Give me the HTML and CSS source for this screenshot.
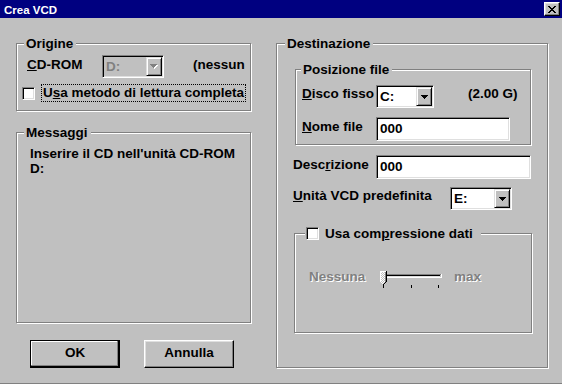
FILE: index.html
```html
<!DOCTYPE html>
<html>
<head>
<meta charset="utf-8">
<link rel="stylesheet" href="styles.css">
</head>
<body>
<div class="dialog">
  <div class="titlebar">
    <span class="title">Crea VCD</span>
    <span class="close"><svg class="xicon" width="8" height="7" viewBox="0 0 8 7" shape-rendering="crispEdges"><path fill="#000" d="M0 0h2v1h-2zM6 0h2v1h-2zM1 1h2v1h-2zM5 1h2v1h-2zM2 2h4v1h-4zM3 3h2v1h-2zM2 4h4v1h-4zM1 5h2v1h-2zM5 5h2v1h-2zM0 6h2v1h-2zM6 6h2v1h-2z"/></svg></span>
  </div>
  <div class="content">
    <div class="col-left">
      <div class="group g-origine">
        <div class="legend lg-origine">Origine</div>
        <div class="row r-cdrom">
          <span class="lbl l-cdrom"><u>C</u>D-ROM</span>
          <span class="combo disabled c-d">
            <span class="ctext">D:</span>
            <span class="cbtn"><svg class="arrow" width="8" height="5" viewBox="0 0 8 5" shape-rendering="crispEdges"><path fill="#fff" d="M1 1h7v1h-1v1h-1v1h-1v1h-1v-1h-1v-1h-1v-1h-1z"/><path fill="#808080" d="M0 0h7v1h-1v1h-1v1h-1v1h-1v-1h-1v-1h-1v-1h-1z"/></svg></span>
          </span>
          <span class="static">(nessun</span>
        </div>
        <div class="row r-check">
          <span class="check"></span>
          <span class="focus">U<u>s</u>a metodo di lettura completa</span>
        </div>
      </div>

      <div class="group g-msg">
        <div class="legend lg-msg">Messaggi</div>
        <div class="msg">Inserire il CD nell'unità CD-ROM<br>D:</div>
      </div>

      <div class="buttons">
        <div class="btn default">OK</div>
        <div class="btn">Annulla</div>
      </div>
    </div>

    <div class="col-right">
      <div class="group g-dest">
        <div class="legend lg-dest">Destinazione</div>

        <div class="group g-pos">
          <div class="legend lg-pos">Posizione file</div>
          <div class="row r-disco">
            <span class="lbl l-pos"><u>D</u>isco fisso</span>
            <span class="combo c-c">
              <span class="ctext">C:</span>
              <span class="cbtn"><svg class="arrow" width="7" height="4" viewBox="0 0 7 4" shape-rendering="crispEdges"><path fill="#000" d="M0 0h7v1h-1v1h-1v1h-1v1h-1v-1h-1v-1h-1v-1h-1z"/></svg></span>
            </span>
            <span class="size">(2.00 G)</span>
          </div>
          <div class="row r-nome">
            <span class="lbl l-pos l-nome"><u>N</u>ome file</span>
            <span class="field f-nome">000</span>
          </div>
        </div>

        <div class="row r-desc">
          <span class="lbl l-desc">Desc<u>r</u>izione</span>
          <span class="field f-desc">000</span>
        </div>

        <div class="row r-unita">
          <span class="lbl l-unita"><u>U</u>nità VCD predefinita</span>
          <span class="combo c-e">
            <span class="ctext">E:</span>
            <span class="cbtn"><svg class="arrow" width="7" height="4" viewBox="0 0 7 4" shape-rendering="crispEdges"><path fill="#000" d="M0 0h7v1h-1v1h-1v1h-1v1h-1v-1h-1v-1h-1v-1h-1z"/></svg></span>
          </span>
        </div>

        <div class="group g-comp">
          <div class="legend lg-comp">
            <span class="check"></span>
            <span class="lg-text">Usa com<u>p</u>ressione dati</span>
          </div>
          <div class="row r-slider">
            <span class="dis nessuna">Nessuna</span>
            <svg class="slider" width="66" height="19" viewBox="0 0 66 19" shape-rendering="crispEdges">
              <defs>
                <pattern id="dith" width="2" height="2" patternUnits="userSpaceOnUse">
                  <rect width="2" height="2" fill="#c0c0c0"/>
                  <rect width="1" height="1" fill="#fff"/>
                  <rect x="1" y="1" width="1" height="1" fill="#fff"/>
                </pattern>
              </defs>
              <rect x="4" y="5" width="59" height="1" fill="#808080"/>
              <rect x="4" y="5" width="1" height="3" fill="#808080"/>
              <rect x="5" y="6" width="57" height="1" fill="#000"/>
              <rect x="5" y="7" width="57" height="1" fill="#dfdfdf"/>
              <rect x="4" y="8" width="60" height="1" fill="#fff"/>
              <rect x="63" y="5" width="1" height="4" fill="#fff"/>
              <rect x="5" y="16" width="1" height="3" fill="#000"/>
              <rect x="33" y="16" width="1" height="3" fill="#000"/>
              <rect x="60" y="16" width="1" height="3" fill="#000"/>
              <path d="M2 2h7v11l-3.5 3.5L2 13z" fill="url(#dith)"/>
              <rect x="2" y="2" width="6" height="1" fill="#fff"/>
              <rect x="2" y="2" width="1" height="11" fill="#fff"/>
              <rect x="3" y="13" width="1" height="1" fill="#fff"/>
              <rect x="4" y="14" width="1" height="1" fill="#fff"/>
              <rect x="8" y="2" width="1" height="11" fill="#000"/>
              <rect x="7" y="3" width="1" height="10" fill="#808080"/>
              <rect x="7" y="13" width="1" height="1" fill="#000"/>
              <rect x="6" y="14" width="1" height="1" fill="#000"/>
              <rect x="5" y="15" width="1" height="1" fill="#000"/>
            </svg>
            <span class="dis max">max</span>
          </div>
        </div>
      </div>
    </div>
  </div>
</div>
</body>
</html>
```
FILE: styles.css
```css
* {
  box-sizing: border-box;
  margin: 0;
  padding: 0;
}

html, body {
  width: 562px;
  height: 384px;
  overflow: hidden;
}

body {
  background: #c0c0c0;
  font-family: "Liberation Sans", Arial, sans-serif;
  font-weight: bold;
  font-size: 13.5px;
  line-height: 16px;
  color: #000;
}

svg { display: block; }

.dialog {
  width: 562px;
  height: 384px;
  border-bottom: 1px solid #808080;
  display: flex;
  flex-direction: column;
}

/* title bar */
.titlebar {
  height: 18px;
  flex: none;
  background: #000080;
  color: #fff;
  display: flex;
  align-items: flex-start;
  justify-content: space-between;
  padding: 0 2px 0 4px;
}

.title {
  font-size: 11.5px;
  line-height: 14px;
  margin-top: 3px;
}

.close {
  width: 16px;
  height: 14px;
  margin-top: 2px;
  background: #c0c0c0;
  border: 1px solid;
  border-color: #fff #000 #000 #fff;
  box-shadow: inset -1px -1px #808080, inset 1px 1px #dfdfdf;
}

.xicon { margin: 3px 0 0 3px; }

/* layout */
.content {
  flex: 1;
  display: flex;
  align-items: flex-start;
  padding-left: 16px;
}

.col-left {
  width: 235px;
  flex: none;
  display: flex;
  flex-direction: column;
}

.col-right {
  flex: none;
  margin-left: 25px;
}

/* etched group box */
.group {
  flex: none;
  border: 1px solid #808080;
  box-shadow: 1px 1px 0 #fff, inset 1px 1px 0 #fff;
  display: flex;
  flex-direction: column;
  align-items: flex-start;
}

.legend {
  flex: none;
  height: 16px;
  margin-top: -8px;
  padding: 0 3px 0 2px;
  background: #c0c0c0;
  white-space: nowrap;
}

.row {
  flex: none;
  display: flex;
  align-items: flex-start;
}

.lbl { flex: none; white-space: nowrap; }

/* Origine */
.g-origine { margin-top: 25px; width: 235px; height: 68px; }
.lg-origine { margin-left: 7px; }
.r-cdrom { margin-top: 3px; height: 23px; }
.l-cdrom { width: 75px; margin: 2px 0 0 10px; }
.c-d { width: 62px; }
.static {
  width: 55px;
  height: 16px;
  margin: 2px 0 0 29px;
  overflow: hidden;
  white-space: nowrap;
}
.r-check { margin-top: 6px; height: 18px; }
.r-check .check { margin: 3px 0 0 5px; }
.focus {
  width: 205px;
  height: 18px;
  margin-left: 6px;
  padding: 0 1px;
  border: 1px dotted #000;
  white-space: nowrap;
}

/* Messaggi */
.g-msg { margin-top: 21px; width: 235px; height: 191px; }
.lg-msg { margin-left: 7px; }
.msg { margin: 5px 0 0 13px; line-height: 15px; }

/* buttons */
.buttons {
  display: flex;
  gap: 24px;
  margin: 17px 0 0 14px;
}

.btn {
  width: 90px;
  height: 28px;
  padding-bottom: 2px;
  display: flex;
  align-items: center;
  justify-content: center;
  border: 1px solid;
  border-color: #fff #000 #000 #fff;
  box-shadow: inset -1px -1px #808080, inset 1px 1px #dfdfdf;
}

.btn.default {
  border-color: #000;
  box-shadow: inset -1px -1px #000, inset -2px -2px #808080, inset 1px 1px #fff;
}

/* combos, fields, checkboxes */
.combo, .field, .check {
  flex: none;
  background: #fff;
  border: 1px solid;
  border-color: #808080 #fff #fff #808080;
  box-shadow: inset 1px 1px #000, inset -1px -1px #dfdfdf;
}

.combo {
  height: 23px;
  padding: 1px;
  display: flex;
  align-items: center;
}

.combo.disabled { background: #c0c0c0; }
.combo.disabled .ctext { color: #808080; }

.ctext {
  flex: 1;
  padding-left: 2px;
  white-space: nowrap;
}

.cbtn {
  width: 16px;
  height: 19px;
  flex: none;
  align-self: flex-start;
  background: #c0c0c0;
  border: 1px solid;
  border-color: #dfdfdf #000 #000 #dfdfdf;
  box-shadow: inset 1px 1px #fff, inset -1px -1px #808080;
  display: flex;
  align-items: center;
  justify-content: center;
}

.field {
  height: 24px;
  padding-left: 3px;
  display: flex;
  align-items: center;
}

.check {
  width: 13px;
  height: 13px;
}

/* Destinazione */
.g-dest { margin-top: 25px; width: 272px; height: 325px; }
.lg-dest { margin-left: 8px; }

.g-pos { margin: 17px 0 0 18px; width: 236px; height: 76px; }
.lg-pos { margin-left: 5px; }
.r-disco { margin-top: 7px; height: 23px; }
.l-pos { width: 74px; margin: 1px 0 0 6px; }
.c-c { width: 58px; }
.size { margin: 1px 0 0 34px; white-space: nowrap; }
.r-nome { margin-top: 9px; height: 24px; }
.l-nome { margin-top: 2px; }
.f-nome { width: 134px; }

.r-desc { margin-top: 10px; height: 24px; }
.l-desc { width: 83px; margin: 2px 0 0 16px; }
.f-desc { width: 155px; }

.r-unita { margin-top: 8px; height: 23px; }
.l-unita { width: 157px; margin: 1px 0 0 16px; }
.c-e { width: 62px; }

/* compressione */
.g-comp { margin: 23px 0 0 17px; width: 238px; height: 100px; }
.lg-comp {
  margin-left: 10px;
  padding: 0 8px 0 0;
  display: flex;
  align-items: flex-start;
}
.lg-comp .check { margin: 1px 0 0 1px; }
.lg-text { margin-left: 6px; }

.r-slider { margin: 27px 0 0 14px; height: 19px; }
.dis {
  color: #808080;
  text-shadow: 1px 1px 0 #fff;
  white-space: nowrap;
}
.nessuna { width: 69px; }
.slider { flex: none; }
.max { margin-left: 10px; }
```
